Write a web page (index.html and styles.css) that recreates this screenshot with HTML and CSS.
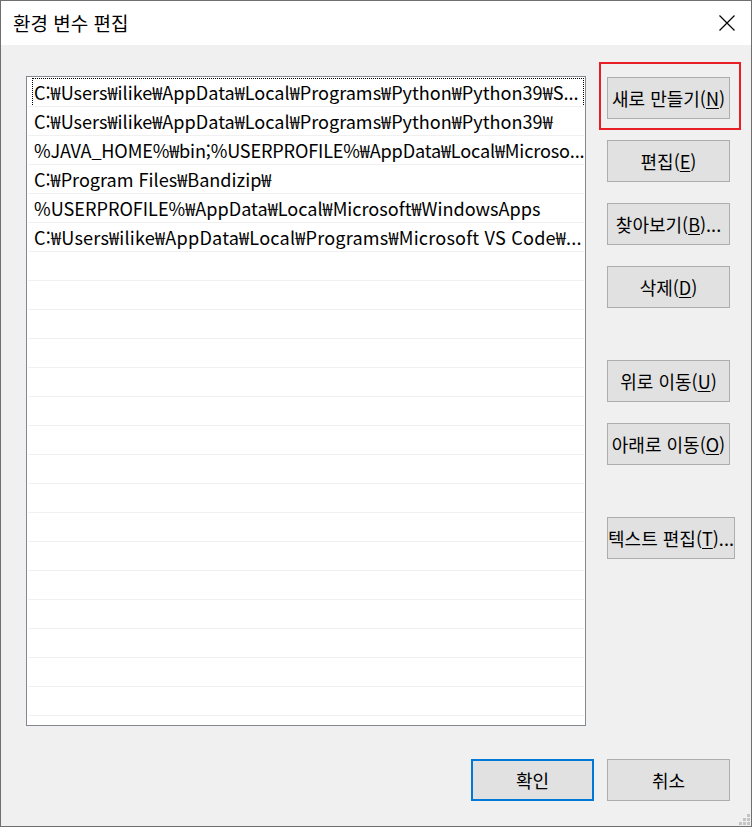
FILE: index.html
```html
<!DOCTYPE html>
<html lang="ko">
<head>
  <meta charset="utf-8">
  <title>환경 변수 편집</title>
  <link rel="stylesheet" href="styles.css">
</head>
<body>
  <div class="window">
    <div class="titlebar">
      <span class="title">환경 변수 편집</span>
      <svg class="close" width="16" height="16" viewBox="0 0 16 16">
        <path d="M0.5 0.5 L15.5 15.5 M15.5 0.5 L0.5 15.5" stroke="#000" stroke-width="1.2" fill="none"/>
      </svg>
    </div>

    <div class="content">
      <div class="main">
        <div class="list">
          <div class="row focus">C:₩Users₩ilike₩AppData₩Local₩Programs₩Python₩Python39₩S...</div>
          <div class="row">C:₩Users₩ilike₩AppData₩Local₩Programs₩Python₩Python39₩</div>
          <div class="row tight">%JAVA_HOME%₩bin;%USERPROFILE%₩AppData₩Local₩Microso...</div>
          <div class="row">C:₩Program Files₩Bandizip₩</div>
          <div class="row">%USERPROFILE%₩AppData₩Local₩Microsoft₩WindowsApps</div>
          <div class="row loose">C:₩Users₩ilike₩AppData₩Local₩Programs₩Microsoft VS Code₩...</div>
          <div class="row"></div>
          <div class="row"></div>
          <div class="row"></div>
          <div class="row"></div>
          <div class="row"></div>
          <div class="row"></div>
          <div class="row"></div>
          <div class="row"></div>
          <div class="row"></div>
          <div class="row"></div>
          <div class="row"></div>
          <div class="row"></div>
          <div class="row"></div>
          <div class="row"></div>
          <div class="row"></div>
          <div class="row"></div>
        </div>

        <div class="side">
          <button class="btn">새로 만들기(<u>N</u>)</button>
          <button class="btn">편집(<u>E</u>)</button>
          <button class="btn">찾아보기(<u>B</u>)...</button>
          <button class="btn">삭제(<u>D</u>)</button>
          <button class="btn group">위로 이동(<u>U</u>)</button>
          <button class="btn">아래로 이동(<u>O</u>)</button>
          <button class="btn group wide">텍스트 편집(<u>T</u>)...</button>
        </div>
      </div>

      <div class="footer">
        <button class="btn default">확인</button>
        <button class="btn">취소</button>
      </div>

      <div class="grip">
        <i></i><i></i><i></i><i></i><i></i><i></i>
      </div>
    </div>

    <div class="highlight"></div>
  </div>
</body>
</html>
```

FILE: styles.css
```css
* {
  box-sizing: border-box;
  margin: 0;
  padding: 0;
}
body {
  background-color: #f0f0f0;
  font-family: "Noto Sans CJK KR", sans-serif;
  font-size: 18px;
  color: #000;
}
.window {
  position: relative;
  width: 752px;
  height: 827px;
  border: 1px solid #6f6f6f;
  background-color: #f0f0f0;
  display: flex;
  flex-direction: column;
}
.titlebar {
  height: 44px;
  background-color: #fff;
  display: flex;
  align-items: center;
  justify-content: space-between;
  padding: 0 16px 0 12px;
}
.title {
  font-size: 19px;
  padding-bottom: 2px;
}
.close {
  margin-top: -1px;
}
.content {
  position: relative;
  flex: 1;
  padding: 31px 0 25px 25px;
  display: flex;
  flex-direction: column;
}
.main {
  display: flex;
  gap: 21px;
}
.list {
  flex-shrink: 0;
  width: 560px;
  height: 650px;
  border: 1px solid #828790;
  background-color: #fff;
  padding: 1px 1px 0 1px;
  overflow: hidden;
}
.row {
  position: relative;
  height: 29px;
  border-bottom: 1px solid #f0f0f0;
  padding-left: 6px;
  line-height: 28px;
  font-size: 18.1px;
  white-space: nowrap;
  overflow: hidden;
}
.row.tight {
  letter-spacing: -0.16px;
}
.row.loose {
  letter-spacing: 0.2px;
}
.row.focus::before {
  content: "";
  position: absolute;
  left: 4px;
  right: 0;
  top: 0;
  bottom: -1px;
  border: 1px dotted #000;
}
.side {
  display: flex;
  flex-direction: column;
  align-items: flex-start;
  gap: 21px;
  padding-top: 1px;
}
.btn {
  flex-shrink: 0;
  width: 123px;
  height: 42px;
  background-color: #e1e1e1;
  border: 1px solid #adadad;
  font-family: inherit;
  font-size: 18px;
  color: #000;
  white-space: nowrap;
  display: flex;
  align-items: center;
  justify-content: center;
  padding: 0;
}
.btn u {
  text-underline-offset: 2px;
}
.btn.group {
  margin-top: 31px;
}
.btn.wide {
  width: 128px;
}
.btn.default {
  border: 2px solid #0078d7;
}
.footer {
  margin-top: 33px;
  padding-right: 21px;
  display: flex;
  justify-content: flex-end;
  gap: 13px;
}
.grip {
  position: absolute;
  right: 1px;
  bottom: 1px;
  width: 11px;
  height: 11px;
  display: grid;
  grid-template-columns: repeat(3, 3px);
  grid-template-rows: repeat(3, 3px);
  gap: 1px;
}
.grip i {
  background-color: #c4c4c4;
}
.grip i:nth-child(1) { grid-area: 1 / 3; }
.grip i:nth-child(2) { grid-area: 2 / 2; }
.grip i:nth-child(3) { grid-area: 2 / 3; }
.grip i:nth-child(4) { grid-area: 3 / 1; }
.grip i:nth-child(5) { grid-area: 3 / 2; }
.grip i:nth-child(6) { grid-area: 3 / 3; }
.highlight {
  position: absolute;
  left: 598px;
  top: 61px;
  width: 142px;
  height: 68px;
  border: 2px solid #e81e25;
}
```
